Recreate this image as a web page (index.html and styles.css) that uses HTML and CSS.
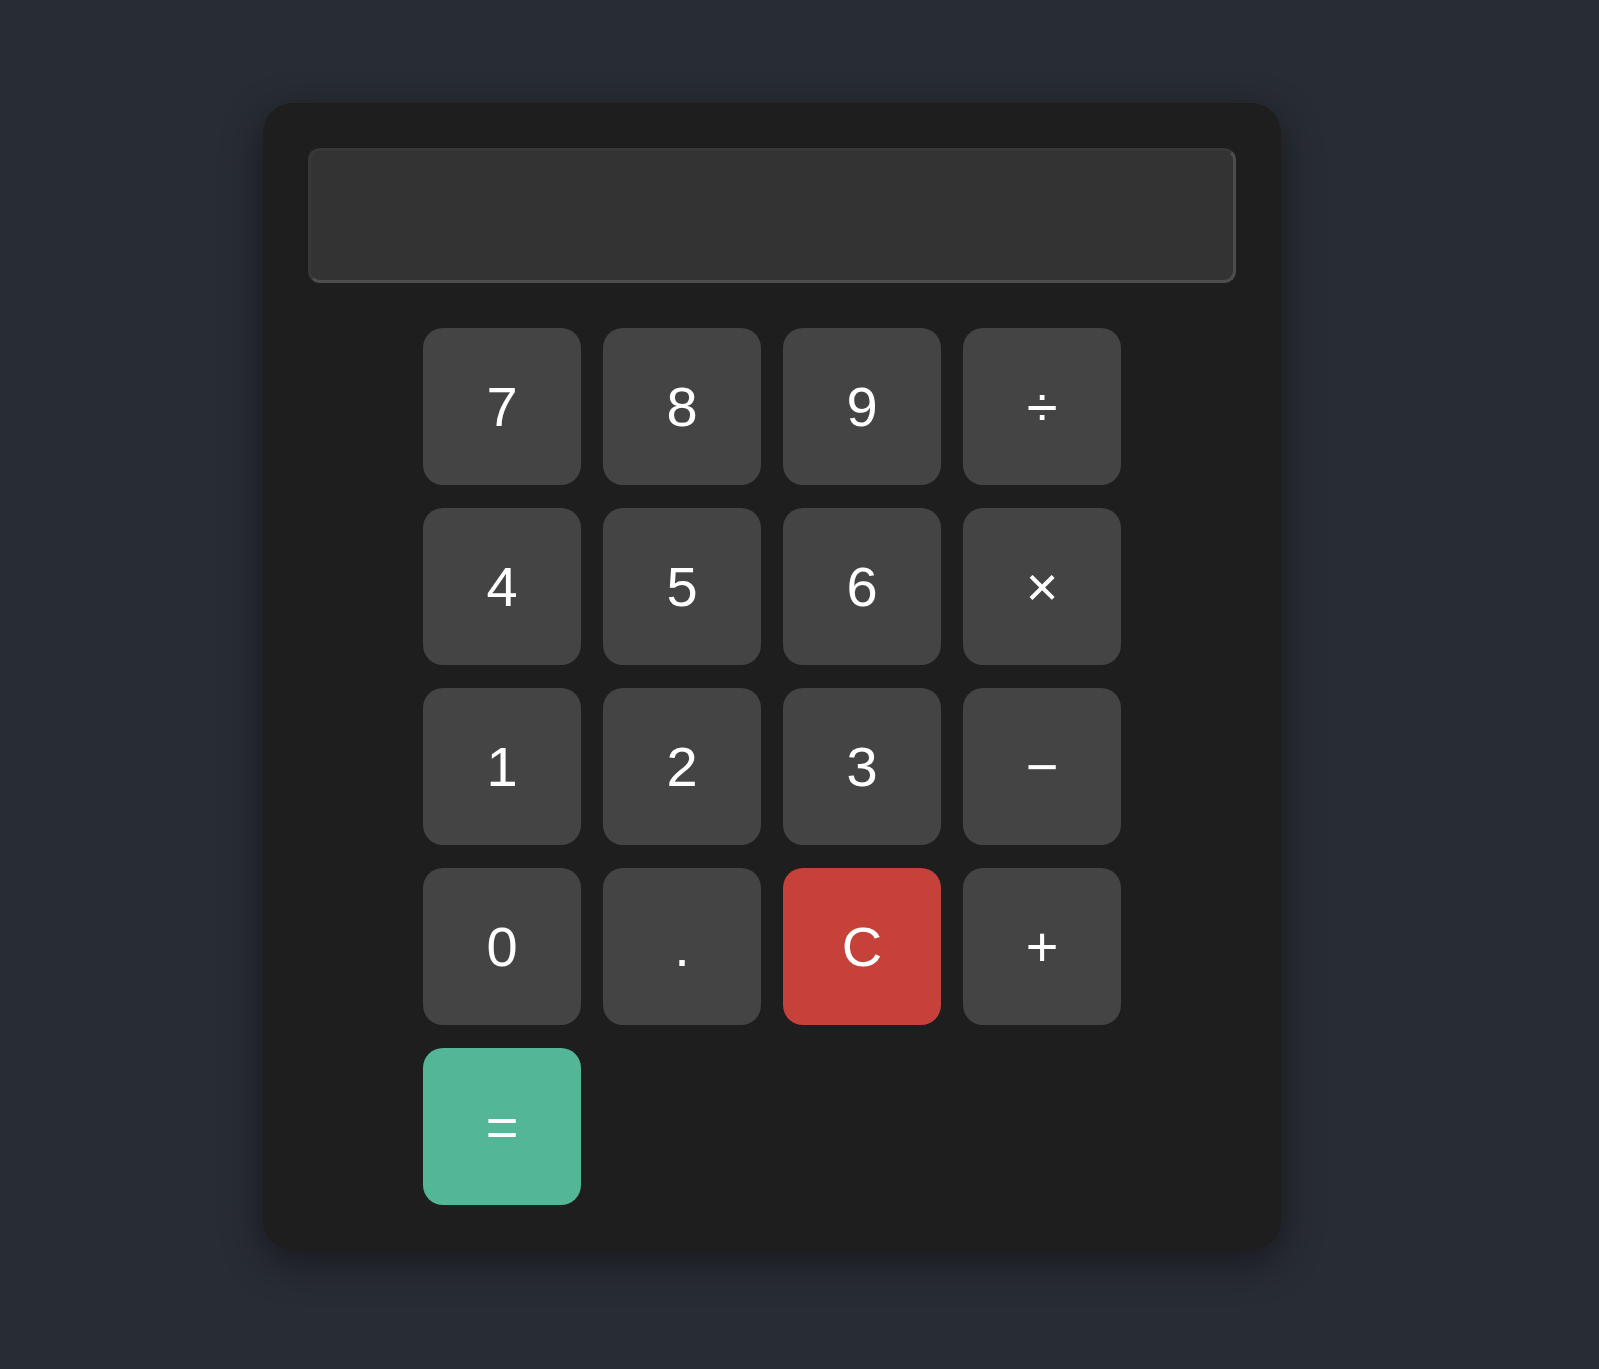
FILE: index.html
```html
<!DOCTYPE html>
<html lang="en">
<head>
    <meta charset="UTF-8">
    <title>Calculator</title>
    <link rel="stylesheet" href="styles.css">
</head>
<body>
    <div class="calculator">
        <input type="text" class="display" id="display" readonly>
        <div class="keys">
            <button class="key" data-value="7">7</button>
            <button class="key" data-value="8">8</button>
            <button class="key" data-value="9">9</button>
            <button class="key" data-value="/">&divide;</button>

            <button class="key" data-value="4">4</button>
            <button class="key" data-value="5">5</button>
            <button class="key" data-value="6">6</button>
            <button class="key" data-value="*">&times;</button>

            <button class="key" data-value="1">1</button>
            <button class="key" data-value="2">2</button>
            <button class="key" data-value="3">3</button>
            <button class="key" data-value="-">&minus;</button>

            <button class="key" data-value="0">0</button>
            <button class="key" data-value=".">.</button>
            <button class="key clear" id="clear">C</button>
            <button class="key" data-value="+">+</button>

            <button class="key equals" id="equals">=</button>
        </div>
    </div>

    <script>
        const display = document.getElementById('display');

        document.querySelectorAll('.key[data-value]').forEach(key => {
            key.addEventListener('click', () => {
                display.value += key.dataset.value;
            });
        });

        document.getElementById('clear').onclick = function() {
            display.value = '';
        }

        document.getElementById('equals').onclick = function() {
            try {
                display.value = Function('return (' + display.value + ')')();
            } catch (error) {
                display.value = 'Error';
            }
        }
    </script>
</body>
</html>
```

FILE: styles.css
```css
body {
    margin: 0;
    min-height: 100vh;
    background: #282c34;
    font-family: "Liberation Sans", Arial, sans-serif;
    display: flex;
    align-items: flex-start;
}
.calculator {
    width: 928px;
    margin: 103px 0 0 263px;
    padding: 45px;
    background: #1e1e1e;
    border-radius: 30px;
    box-shadow: 0 12px 40px rgba(0, 0, 0, 0.45);
}
.display {
    display: block;
    box-sizing: border-box;
    width: 100%;
    height: 135px;
    margin: 0 0 45px;
    padding: 0 20px;
    background: #333;
    color: #fff;
    font-family: inherit;
    font-size: 56px;
    text-align: right;
    border: 3px solid;
    border-color: #383838 #4d4d4d #4d4d4d #383838;
    border-radius: 12px;
    outline: none;
}
.keys {
    display: grid;
    grid-template-columns: repeat(4, 158px);
    grid-auto-rows: 157px;
    gap: 23px 22px;
    justify-content: center;
}
.key {
    display: flex;
    align-items: center;
    justify-content: center;
    padding: 0;
    background: #444;
    color: #fff;
    font-family: inherit;
    font-size: 56px;
    border: none;
    border-radius: 20px;
    cursor: pointer;
    transition: background-color 0.2s;
}
.key:hover {
    background: #555;
}
.clear {
    background: #c5413a;
}
.clear:hover {
    background: #d14d45;
}
.equals {
    background: #52b697;
}
.equals:hover {
    background: #5fc3a4;
}
```
